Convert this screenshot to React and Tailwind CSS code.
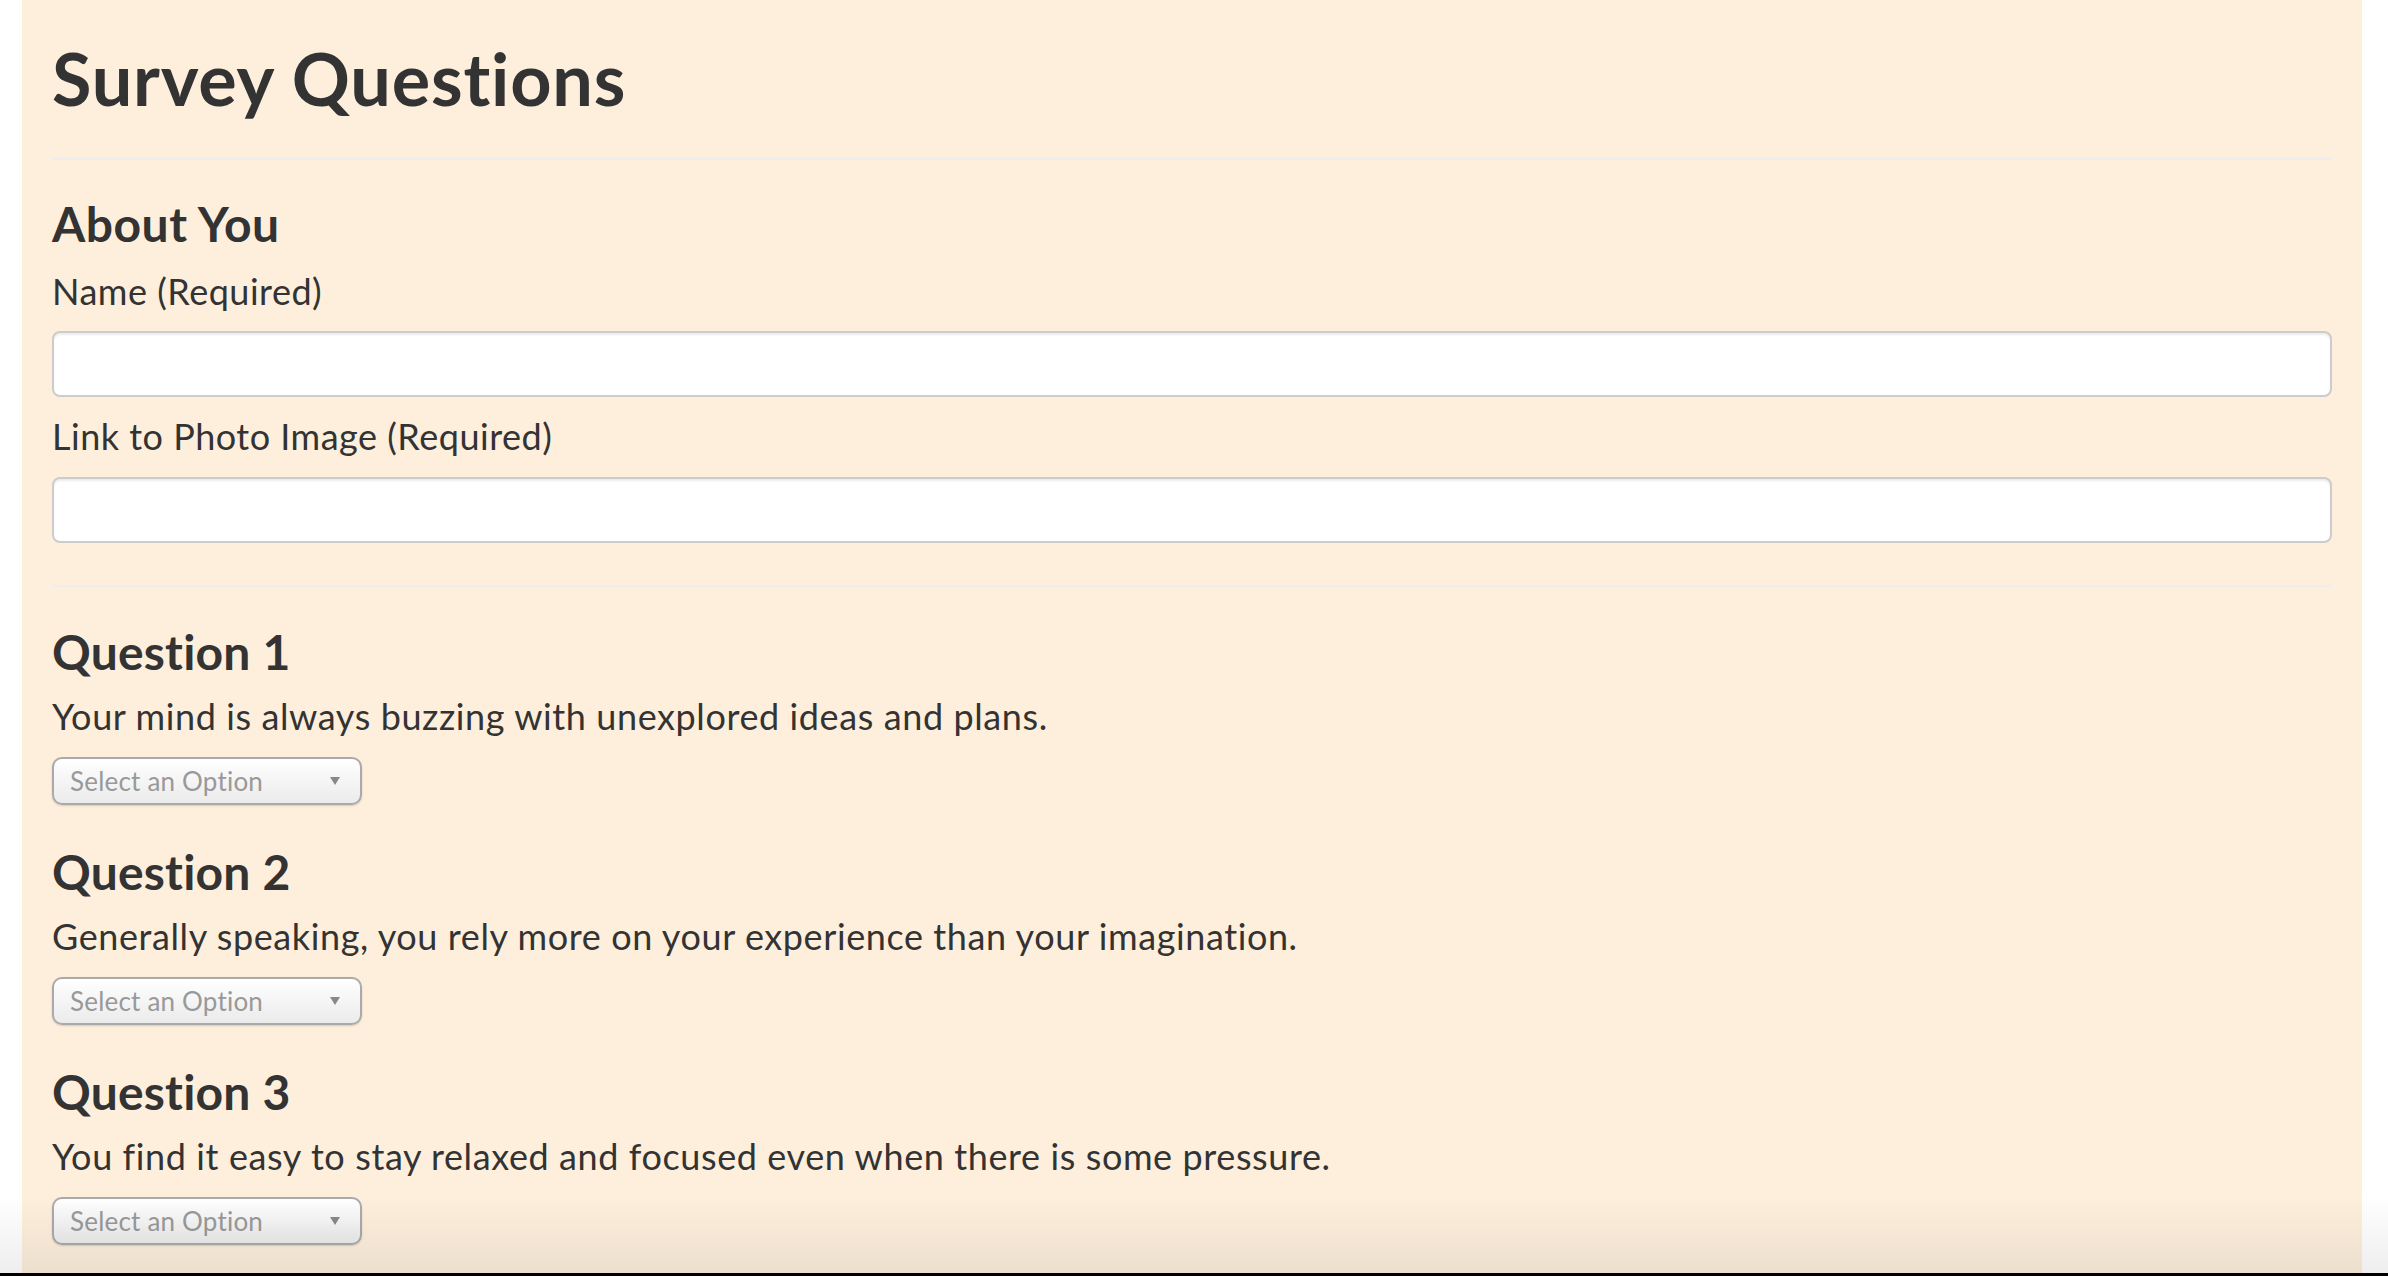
import { useState } from "react"

const questions = [
    "Your mind is always buzzing with unexplored ideas and plans.",
    "Generally speaking, you rely more on your experience than your imagination.",
    "You find it easy to stay relaxed and focused even when there is some pressure.",
]

function OptionSelect() {
    return (
        <div className="mt-[19px] relative w-[310px] h-[48px] rounded-[10px] border-2 border-[#aaa] bg-gradient-to-b from-white to-[#ebebeb] shadow-[0_1px_2px_rgba(0,0,0,0.15)] flex items-center pl-[16px] pr-[20px]">
            <span className="text-[26px] leading-[30px] tracking-[0.2px] text-[#999] flex-1">Select an Option</span>
            <svg width="10" height="8" viewBox="0 0 10 8">
                <polygon points="0,0 10,0 5,8" fill="#888" />
            </svg>
        </div>
    )
}

export default function App() {
    const [name, setName] = useState("")
    const [photo, setPhoto] = useState("")

    return (
        <div className="relative h-screen overflow-hidden bg-white">
            <div className="ml-[22px] w-[2340px] h-full bg-[#feefdc] px-[30px] text-[#333] font-['Lato',sans-serif] [font-variant-ligatures:none]">
                <h1 className="pt-[38px] text-[72px] leading-[80px] font-bold tracking-[0.8px]">Survey Questions</h1>
                <hr className="mt-[40px] border-0 border-t-2 border-[#eeeeee]" />

                <h3 className="mt-[36px] text-[48px] leading-[56px] font-bold tracking-[0.5px]">About You</h3>
                <div className="mt-[17px] text-[36px] leading-[44px] tracking-[0.5px]">Name (Required)</div>
                <input
                    value={name}
                    onChange={(e) => setName(e.target.value)}
                    className="mt-[18px] block w-full h-[66px] bg-white border-2 border-[#ccc] rounded-[8px] shadow-[inset_0_2px_2px_rgba(0,0,0,0.075)] px-[24px] text-[28px] outline-none"
                />
                <div className="mt-[17px] text-[36px] leading-[44px] tracking-[0.5px]">Link to Photo Image (Required)</div>
                <input
                    value={photo}
                    onChange={(e) => setPhoto(e.target.value)}
                    className="mt-[19px] block w-full h-[66px] bg-white border-2 border-[#ccc] rounded-[8px] shadow-[inset_0_2px_2px_rgba(0,0,0,0.075)] px-[24px] text-[28px] outline-none"
                />
                <hr className="mt-[42px] border-0 border-t-2 border-[#eeeeee]" />

                <div className="mt-[37px]">
                    {questions.map((q, i) => (
                        <div key={i} className={i > 0 ? "mt-[39px]" : ""}>
                            <h3 className="text-[48px] leading-[56px] font-bold tracking-[0.2px]">Question {i + 1}</h3>
                            <div className="mt-[14px] text-[36px] leading-[44px] tracking-[0.6px]">{q}</div>
                            <OptionSelect />
                        </div>
                    ))}
                </div>
            </div>

            {/* bottom shade of the window */}
            <div className="pointer-events-none absolute left-0 right-0 bottom-0 h-[80px] bg-gradient-to-b from-transparent to-[rgba(0,0,0,0.07)]" />
            <div className="absolute left-0 right-0 bottom-0 h-[3px] bg-black" />
        </div>
    )
}
